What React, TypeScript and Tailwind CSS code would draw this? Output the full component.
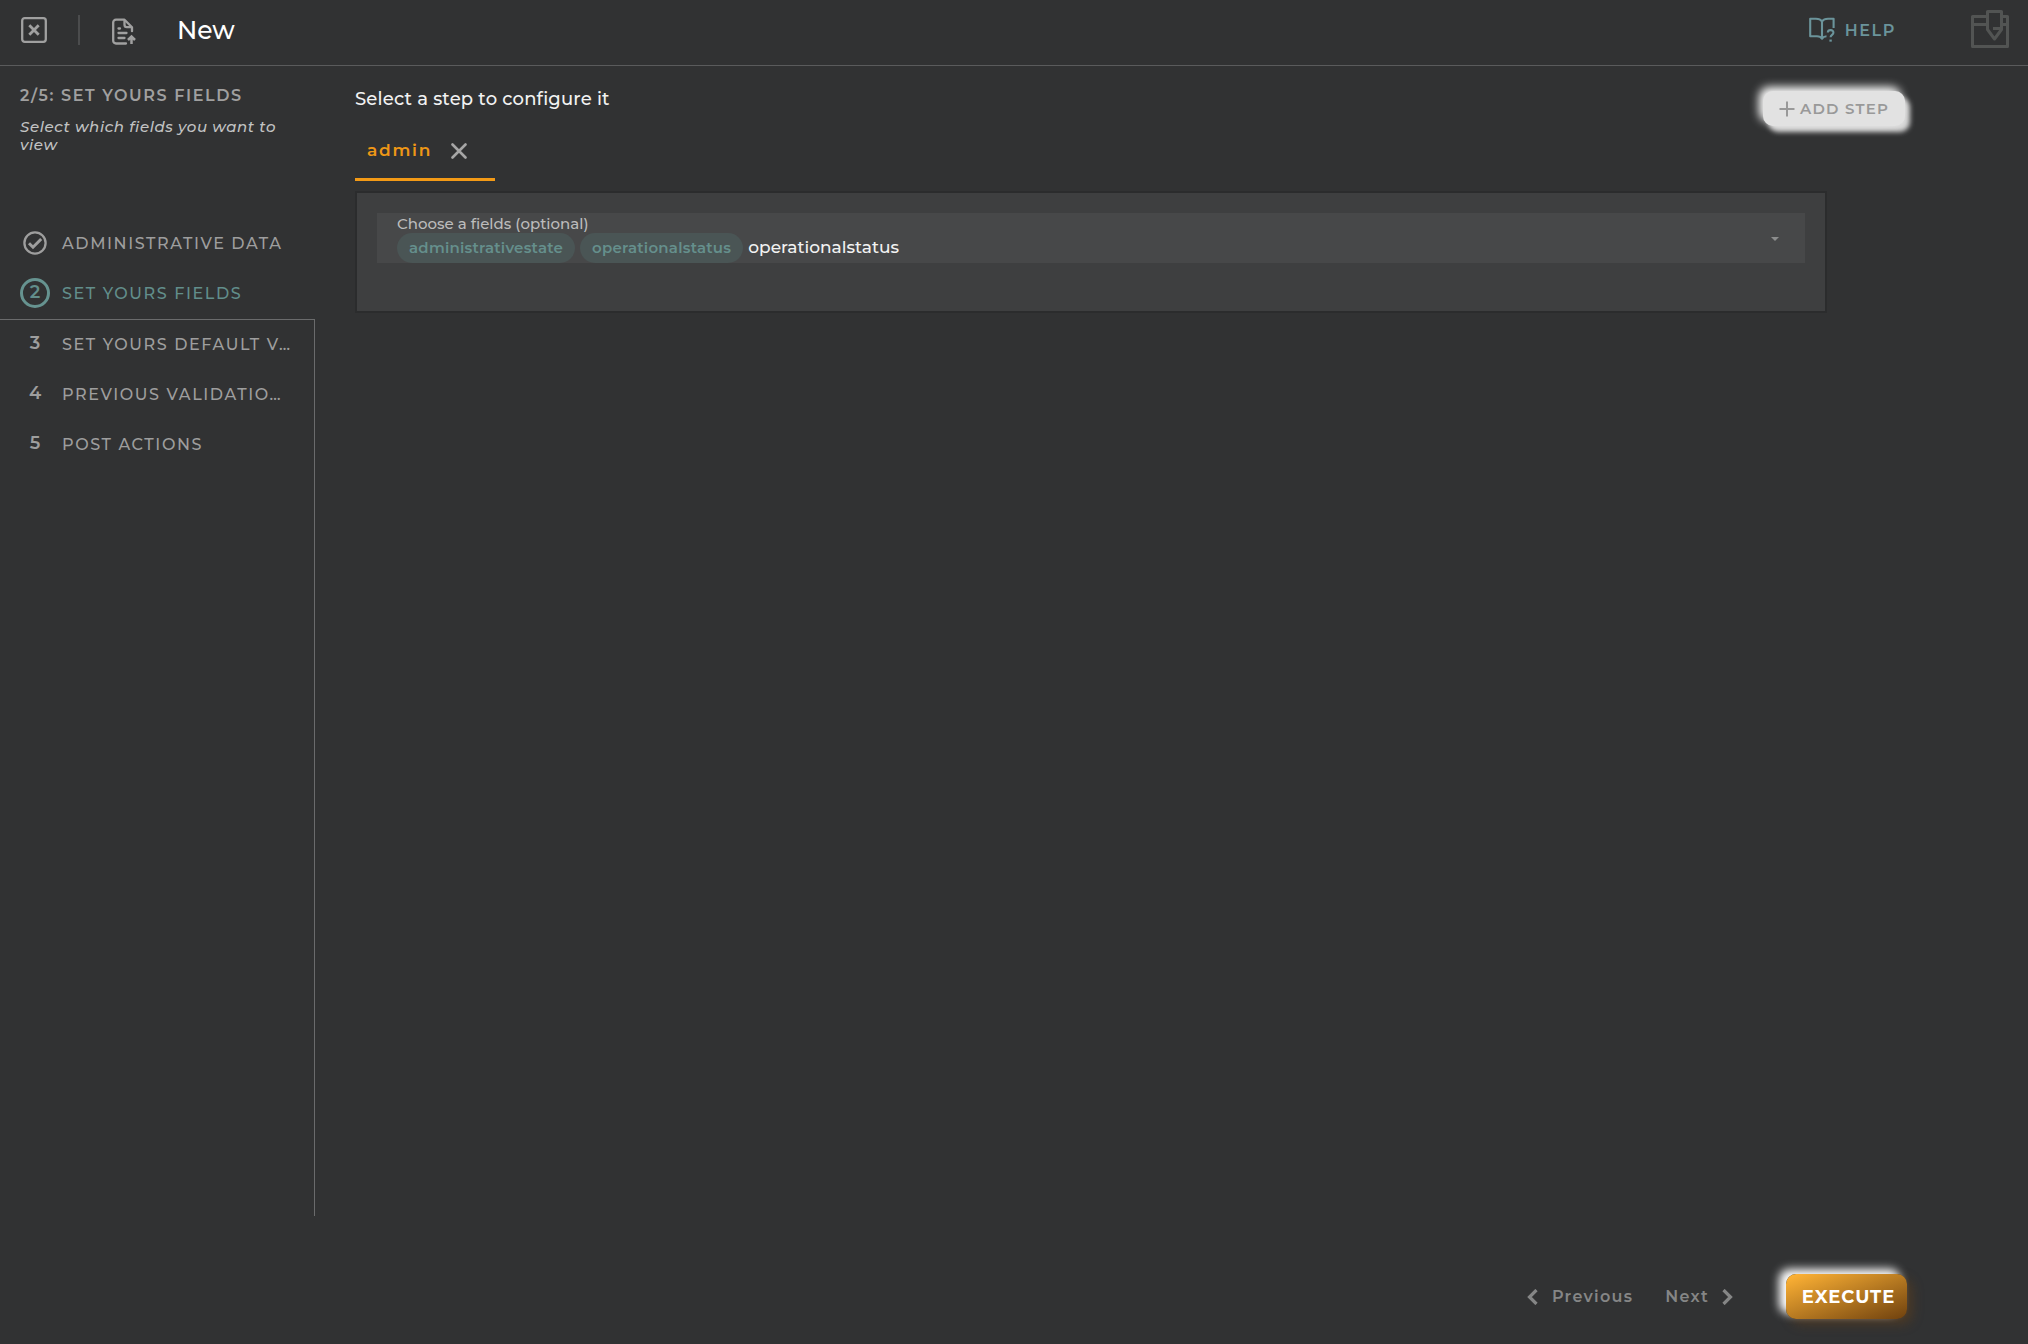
import React, { useState } from "react";

type StepState = "done" | "current" | "pending";

const steps: { label: string; state: StepState }[] = [
  { label: "ADMINISTRATIVE DATA", state: "done" },
  { label: "SET YOURS FIELDS", state: "current" },
  { label: "SET YOURS DEFAULT V…", state: "pending" },
  { label: "PREVIOUS VALIDATIO…", state: "pending" },
  { label: "POST ACTIONS", state: "pending" },
];

function CloseIcon() {
  return (
    <svg width="26" height="26" viewBox="0 0 26 26" fill="none" stroke="currentColor" strokeWidth="2.3">
      <rect x="1.2" y="1.2" width="23.6" height="23.6" rx="2.5" />
      <path d="M8.3 8.300l9.400 9.400M17.700 8.300l-9.400 9.400" strokeWidth="2.800" />
    </svg>
  );
}

function FileUploadIcon() {
  return (
    <svg width="24" height="28" viewBox="0 0 24 28" fill="none" stroke="currentColor" strokeWidth="2.300">
      <path d="M14 25.500H4A2.800 2.800 0 0 1 1.200 22.700V4.500A2.800 2.800 0 0 1 4 1.700h8.500l7.500 7.500v4" strokeLinecap="round" strokeLinejoin="round" />
      <path d="M12.500 2v4.800a2.400 2.400 0 0 0 2.400 2.400H20" />
      <path d="M6.500 10.500h1.500M6.500 15h8M6.500 20h6" strokeLinecap="round" />
      <path d="M19.500 26v-7M16 22l3.500-3.500L23 22" strokeWidth="2.500" />
    </svg>
  );
}

function HelpIcon() {
  return (
    <svg width="26" height="25" viewBox="0 0 26 25" fill="none" stroke="currentColor" strokeWidth="2.100" strokeLinejoin="round">
      <path d="M13 4.300C11.500 2.200 9.500 1.800 7 1.800H1.200v17.400H8c2.500 0 4 .7 5 2.500M13 4.300C14.500 2.200 16.500 1.800 19 1.800h5.600V11M13 4.300v17.400c.8-1.500 2-2.200 4.500-2.400" />
      <path d="M18.800 15.500c.2-3.400 5.800-3.100 5.600.2 0 2.200-2.800 2.100-2.800 4.500" />
      <path d="M20.400 23.600h2.400" />
    </svg>
  );
}

function ToolboxIcon() {
  return (
    <svg width="38" height="39" viewBox="0 0 38 39" fill="none" stroke="currentColor" strokeWidth="3" strokeLinejoin="round">
      <path d="M16 6.500H1.500v30h35v-30H31M1.500 14.500H16M31 14.500h5.500" />
      <path d="M16.500 1.500h14v18L23.500 29l-7-9.500z" />
      <path d="M22 18.500h8.500" />
    </svg>
  );
}

function StepMark({ state, index }: { state: StepState; index: number }) {
  if (state === "done") {
    return (
      <svg width="24" height="24" viewBox="0 0 24 24" fill="none" stroke="currentColor" strokeWidth="2.300">
        <circle cx="12" cy="12" r="10.600" />
        <path d="M6 12.200l4 4 8.200-8.200" strokeWidth="3" />
      </svg>
    );
  }
  if (state === "current") {
    return (
      <span className="flex size-[30px] items-center justify-center rounded-full border-3 border-[#669390] pb-0.5 text-lg font-semibold">
        {index}
      </span>
    );
  }
  return <span className="pb-1 text-lg font-semibold">{index}</span>;
}

function Header() {
  return (
    <header className="flex h-[66px] items-center border-b border-[#5a5b5c] pr-[19px] pb-1.5 pl-[21px]">
      <button type="button" aria-label="Close" className="text-[#a0a0a0]">
        <CloseIcon />
      </button>
      <span className="ml-[31px] h-[30px] w-0.5 bg-[#4b4c4d]" />
      <button type="button" aria-label="Upload file" className="ml-8 pt-1 text-[#a0a0a0]">
        <FileUploadIcon />
      </button>
      <h1 className="ml-[41px] pt-0.5 text-[25px] font-medium text-white">New</h1>
      <a href="#help" className="ml-auto flex items-center gap-2.5 text-[#6b949b]">
        <HelpIcon />
        <span className="pt-0.5 text-base font-semibold tracking-widest">HELP</span>
      </a>
      <button type="button" aria-label="Toolbox" className="ml-[75px] text-[#525453]">
        <ToolboxIcon />
      </button>
    </header>
  );
}

function Sidebar() {
  return (
    <aside className="flex w-[315px] shrink-0 flex-col">
      <div className="h-[152px] pt-[18px] pr-5 pl-5">
        <h2 className="text-base font-semibold tracking-widest text-[#a0a0a0]">2/5: SET YOURS FIELDS</h2>
        <p className="mt-2.5 text-[15px] leading-[18px] font-medium tracking-[0.040em] text-[#c2c3c3] italic">
          Select which fields you want to view
        </p>
      </div>
      <nav aria-label="Steps" className="flex grow flex-col">
        <ol className="h-[101px]">
          {steps.slice(0, 2).map((step, i) => (
            <StepItem key={step.label} step={step} index={i + 1} />
          ))}
        </ol>
        <ol start={3} className="grow border-t border-r border-[#6a6b6c]">
          {steps.slice(2).map((step, i) => (
            <StepItem key={step.label} step={step} index={i + 3} />
          ))}
        </ol>
      </nav>
    </aside>
  );
}

function StepItem({ step, index }: { step: { label: string; state: StepState }; index: number }) {
  const color = step.state === "current" ? "text-[#628e8b]" : "text-[#9e9e9e]";
  const labelPadding = step.state === "pending" ? "pt-0" : "pt-0.5";
  return (
    <li>
      <button
        type="button"
        aria-current={step.state === "current" ? "step" : undefined}
        className={`flex h-[50px] w-full items-center pl-5 text-left whitespace-nowrap ${color}`}
      >
        <span className="flex w-[30px] shrink-0 justify-center">
          <StepMark state={step.state} index={index} />
        </span>
        <span className={`ml-3 text-base font-medium tracking-widest ${labelPadding}`}>{step.label}</span>
      </button>
    </li>
  );
}

function FieldPicker() {
  const [value, setValue] = useState("operationalstatus");
  return (
    <section className="mr-[201px] border-2 border-[#2b2c2d] bg-[#3e3f40] px-5 pt-5 pb-12">
      <div className="flex h-[50px] items-center bg-[#474849] pr-6 pl-5">
        <div className="grow">
          <label htmlFor="fields" className="block h-5 pt-px text-[15px] leading-5 font-medium text-[#bcbcbc]">
            Choose a fields (optional)
          </label>
          <div className="flex h-[30px] items-center gap-[5px]">
            {["administrativestate", "operationalstatus"].map((chip) => (
              <span
                key={chip}
                className="flex h-[30px] items-center rounded-full bg-[#4a5555] px-3 text-[15px] font-semibold tracking-[0.015em] text-[#658f8c]"
              >
                {chip}
              </span>
            ))}
            <input
              id="fields"
              value={value}
              onChange={(e) => setValue(e.target.value)}
              className="min-w-0 grow bg-transparent text-[17px] font-medium text-[#f2f2f2] outline-none"
            />
          </div>
        </div>
        <button type="button" aria-label="Open list" className="text-[#8c8d8d]">
          <svg width="12" height="8" viewBox="0 0 12 8" fill="currentColor">
            <path d="M2 3h8L6 7z" />
          </svg>
        </button>
      </div>
    </section>
  );
}

function Content() {
  return (
    <main className="grow pt-5 pl-10">
      <div className="flex items-start justify-between pr-[123px]">
        <div>
          <h2 className="h-[26px] text-[18px] leading-[26px] font-medium tracking-[0.010em] text-[#f2f2f2]">
            Select a step to configure it
          </h2>
          <div role="tablist" className="mt-[18px] flex">
            <div className="flex h-[51px] w-[140px] items-center justify-between border-b-3 border-[#f39a16] pr-7 pb-1.5 pl-3">
              <button type="button" role="tab" aria-selected="true" className="text-[17px] font-semibold tracking-widest text-[#ee9716]">
                admin
              </button>
              <button type="button" aria-label="Remove admin" className="text-[#a6a6a6]">
                <svg width="16" height="16" viewBox="0 0 16 16" fill="none" stroke="currentColor" strokeWidth="2.600" strokeLinecap="round">
                  <path d="M1.500 1.500l13 13M14.500 1.500l-13 13" />
                </svg>
              </button>
            </div>
          </div>
        </div>
        <button
          type="button"
          className="mt-[5px] flex h-[35px] w-[142px] items-center justify-center gap-[5px] rounded-[10px] bg-[#e2e2e2] text-[15px] font-semibold tracking-[0.080em] text-[#999999] shadow-[-4px_-4px_10px_#ffffff,5px_6px_5px_#d8d8d8]"
        >
          <svg width="16" height="16" viewBox="0 0 16 16" fill="none" stroke="currentColor" strokeWidth="2">
            <path d="M8 0.500v15M0.500 8h15" />
          </svg>
          <span className="pt-px">ADD STEP</span>
        </button>
      </div>
      <div className="mt-2.5">
        <FieldPicker />
      </div>
    </main>
  );
}

function Footer() {
  return (
    <footer className="flex h-32 items-center justify-end pt-[33px] pr-[121px] text-[#858686]">
      <button type="button" className="flex items-center gap-[14px] text-base font-semibold tracking-[0.080em]">
        <svg width="11" height="16" viewBox="0 0 11 16" fill="none" stroke="currentColor" strokeWidth="3.200">
          <path d="M9.500 1L2.500 8l7 7" />
        </svg>
        Previous
      </button>
      <button type="button" className="ml-8 flex items-center gap-[13px] text-base font-semibold tracking-[0.080em]">
        Next
        <svg width="11" height="16" viewBox="0 0 11 16" fill="none" stroke="currentColor" strokeWidth="3.200">
          <path d="M1.500 1l7 7-7 7" />
        </svg>
      </button>
      <button
        type="button"
        className="ml-[53px] h-[45px] w-[121px] rounded-[10px] bg-linear-[160deg,#fbb034_5%,#774710_95%] pt-0.5 pl-1 text-[18px] font-bold tracking-[1px] text-white shadow-[-7px_-5px_10px_#ffffff,5px_5px_12px_#77471066]"
      >
        EXECUTE
      </button>
    </footer>
  );
}

export default function App() {
  return (
    <div className="flex min-h-screen flex-col bg-[#313233] font-['Montserrat','Inter',sans-serif]">
      <Header />
      <div className="flex grow">
        <Sidebar />
        <Content />
      </div>
      <Footer />
    </div>
  );
}
